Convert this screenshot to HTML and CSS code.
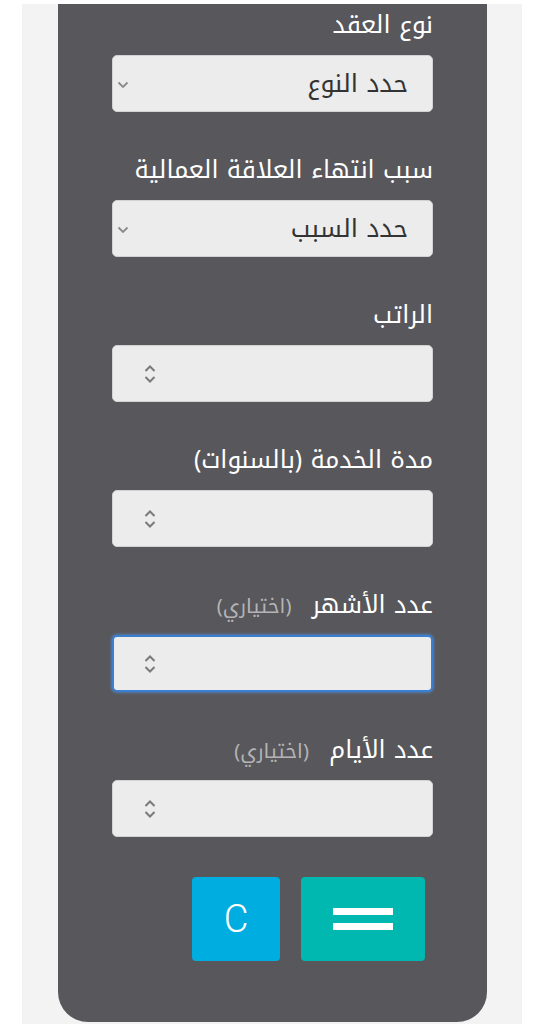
FILE: index.html
```html
<!DOCTYPE html>
<html lang="ar" dir="rtl">
<head>
<meta charset="utf-8">
<link rel="stylesheet" href="styles.css">
</head>
<body>
<div class="page">
  <div class="panel">
    <form class="form">
      <div class="field">
        <div class="label">نوع العقد</div>
        <div class="control select"><span class="value">حدد النوع</span>
          <svg class="chev" width="12" height="8" viewBox="0 0 12 8"><path d="M1.5 1.5l4.5 4.5 4.5-4.5" fill="none" stroke="#8a8a8a" stroke-width="1.8"/></svg>
        </div>
      </div>
      <div class="field">
        <div class="label">سبب انتهاء العلاقة العمالية</div>
        <div class="control select"><span class="value">حدد السبب</span>
          <svg class="chev" width="12" height="8" viewBox="0 0 12 8"><path d="M1.5 1.5l4.5 4.5 4.5-4.5" fill="none" stroke="#8a8a8a" stroke-width="1.8"/></svg>
        </div>
      </div>
      <div class="field">
        <div class="label">الراتب</div>
        <div class="control number">
          <svg class="spin" width="14" height="24" viewBox="0 0 14 24"><path d="M2.5 9l4.5-4.5 4.5 4.5M2.5 15l4.5 4.5 4.5-4.5" fill="none" stroke="#7a7a7a" stroke-width="2"/></svg>
        </div>
      </div>
      <div class="field">
        <div class="label">مدة الخدمة (بالسنوات)</div>
        <div class="control number">
          <svg class="spin" width="14" height="24" viewBox="0 0 14 24"><path d="M2.5 9l4.5-4.5 4.5 4.5M2.5 15l4.5 4.5 4.5-4.5" fill="none" stroke="#7a7a7a" stroke-width="2"/></svg>
        </div>
      </div>
      <div class="field">
        <div class="label">عدد الأشهر <span class="opt">(اختياري)</span></div>
        <div class="control number focused">
          <svg class="spin" width="14" height="24" viewBox="0 0 14 24"><path d="M2.5 9l4.5-4.5 4.5 4.5M2.5 15l4.5 4.5 4.5-4.5" fill="none" stroke="#7a7a7a" stroke-width="2"/></svg>
        </div>
      </div>
      <div class="field">
        <div class="label">عدد الأيام <span class="opt">(اختياري)</span></div>
        <div class="control number">
          <svg class="spin" width="14" height="24" viewBox="0 0 14 24"><path d="M2.5 9l4.5-4.5 4.5 4.5M2.5 15l4.5 4.5 4.5-4.5" fill="none" stroke="#7a7a7a" stroke-width="2"/></svg>
        </div>
      </div>
      <div class="buttons">
        <div class="btn eq"><span class="bar"></span><span class="bar"></span></div>
        <div class="btn clear">C</div>
      </div>
    </form>
  </div>
</div>
</body>
</html>
```
FILE: styles.css
```css
html, body {
  margin: 0;
  padding: 0;
  background: #ffffff;
}
body {
  padding-top: 4px;
  font-family: "Noto Kufi Arabic", "Droid Arabic Kufi", "DejaVu Sans", "Noto Sans", sans-serif;
}
.page {
  margin: 0 23px 0 22px;
  background: #f3f3f3;
  height: 1020px;
  display: flex;
}
.panel {
  margin-right: 35px;
  width: 429px;
  height: 1018px;
  background: #58575b;
  border-radius: 0 0 30px 30px;
  display: flex;
  justify-content: center;
  padding-top: 6px;
  box-sizing: border-box;
}
.form {
  width: 321px;
  display: flex;
  flex-direction: column;
}
.field {
  display: flex;
  flex-direction: column;
  margin-bottom: 43px;
}
.field:nth-child(6) { margin-bottom: 40px; }
.label {
  height: 30px;
  line-height: 30px;
  font-size: 24.5px;
  color: #ffffff;
  margin-bottom: 15px;
  white-space: nowrap;
}
.opt {
  font-size: 20px;
  color: #b4b4b6;
  margin-right: 12px;
}
.control {
  height: 57px;
  box-sizing: border-box;
  background: #ececec;
  border: 1px solid #d2d2d2;
  border-radius: 5px;
  display: flex;
  align-items: center;
  position: relative;
}
.select {
  padding: 0 24px 0 4px;
  justify-content: space-between;
}
.value {
  font-size: 25px;
  color: #333333;
}
.chev { margin-top: 2px; }
.number {
  padding-left: 30px;
  justify-content: flex-end;
}
.focused {
  border: 2px solid #3b7fd0;
  box-shadow: 0 0 3px 1px rgba(80, 150, 230, 0.6);
  padding-left: 29px;
}
.buttons {
  display: flex;
  gap: 21px;
  padding-right: 8px;
}
.btn {
  height: 84px;
  border-radius: 4px;
  display: flex;
  align-items: center;
  justify-content: center;
}
.eq {
  width: 124px;
  background: #00b8b0;
  flex-direction: column;
  gap: 8px;
}
.bar {
  display: block;
  width: 60px;
  height: 7px;
  background: #ffffff;
}
.clear {
  width: 88px;
  background: #00ade0;
  color: #ffffff;
  font-family: Roboto, "Liberation Sans", sans-serif;
  font-size: 38px;
  font-weight: 300;
}
```
